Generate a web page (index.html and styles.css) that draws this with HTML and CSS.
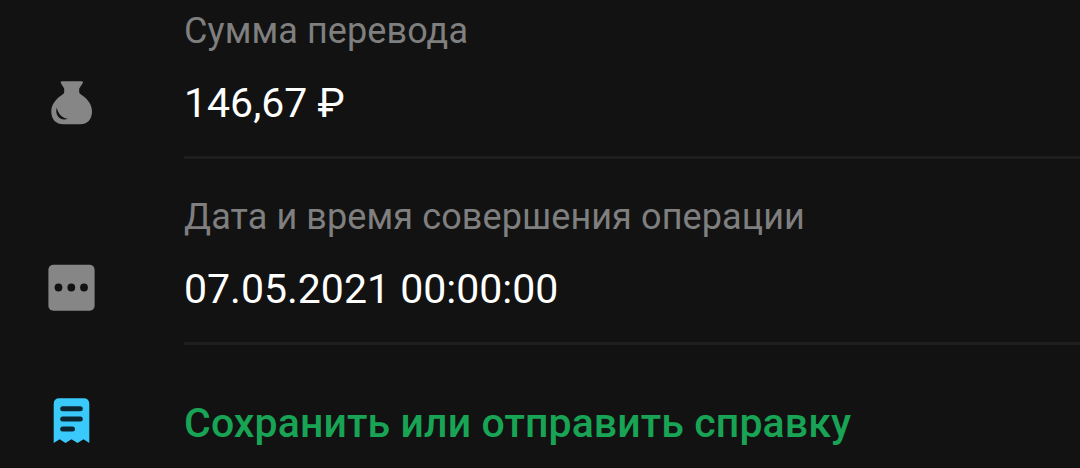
FILE: index.html
```html
<!DOCTYPE html>
<html lang="ru">
<head>
  <meta charset="UTF-8">
  <title>Детали операции</title>
  <link rel="stylesheet" href="styles.css">
</head>
<body>
  <div class="details">
    <div class="row first">
      <svg class="icon" viewBox="0 0 48 48">
        <path fill="#868686" d="M14 2.300H33.700C34.900 2.300 35.300 3.200 34.700 4.200L31.200 9.500V13C31.200 14.500 32.500 15.200 34 16.300C40 20.300 44 26 44 32.500C44 40.500 39.500 45.300 32 45.300H15.500C8 45.300 3.300 40.500 3.300 32.500C3.300 26 7.500 20.300 13.500 16.300C15 15.200 16.200 14.500 16.200 13V9.500L12.900 4.200C12.300 3.200 12.800 2.300 14 2.300Z"/>
        <path fill="#121212" d="M8.700 28.700C6.500 36.500 12.500 42.500 20 39.700C14.500 39.500 10.300 35 8.700 28.700Z"/>
      </svg>
      <div class="content">
        <div class="label">Сумма перевода</div>
        <div class="value amount">146,67 ₽</div>
      </div>
    </div>

    <div class="row">
      <svg class="icon" viewBox="0 0 48 48">
        <rect x=".4" y="-.3" width="46.200" height="46" rx="5" fill="#868686"/>
        <circle cx="10.500" cy="22.500" r="3.900" fill="#121212"/>
        <circle cx="23.300" cy="22.500" r="3.900" fill="#121212"/>
        <circle cx="36" cy="22.500" r="3.900" fill="#121212"/>
      </svg>
      <div class="content">
        <div class="label">Дата и время совершения операции</div>
        <div class="value">07.05.2021 00:00:00</div>
      </div>
    </div>

    <div class="row action">
      <svg class="icon" viewBox="0 0 48 48">
        <path fill="#39c9fb" d="M11.500 -.7H35.500Q41.300 -.7 41.300 5V44L35.500 40.300L29.500 44L23.500 40.300L17.500 44L11.700 40.300L5.700 44V5Q5.700 -.7 11.500 -.7Z"/>
        <path stroke="#0b2631" stroke-width="5" stroke-linecap="round" d="M14.700 9.700H32.300M14.700 20H32.300M14.700 30H24.500"/>
      </svg>
      <a class="link">Сохранить или отправить справку</a>
    </div>
  </div>
</body>
</html>
```
FILE: styles.css
```css
body { margin: 0; height: 468px; overflow: hidden; background: #121212; color: #fff; font-family: Roboto, sans-serif; }
.row { display: flex; align-items: flex-end; padding-left: 48px; }
.icon { flex: none; width: 48px; height: 48px; margin: 0 88px 32px 0; overflow: visible; }
.content { flex: 1; padding: 37px 0 29px; border-bottom: 3px solid #1e1e1e; }
.first .content { padding-top: 10px; }
.label { color: #7f7f7f; font-size: 36px; line-height: 42px; letter-spacing: 0.1px; white-space: nowrap; }
.value { margin-top: 27px; font-size: 41px; line-height: 48px; white-space: nowrap; }
.action { align-items: flex-start; padding-top: 54px; }
.action .icon { margin-bottom: 0; }
.link { color: #18a454; font-size: 41px; font-weight: 500; line-height: 48px; letter-spacing: 0.12px; white-space: nowrap; }
```
